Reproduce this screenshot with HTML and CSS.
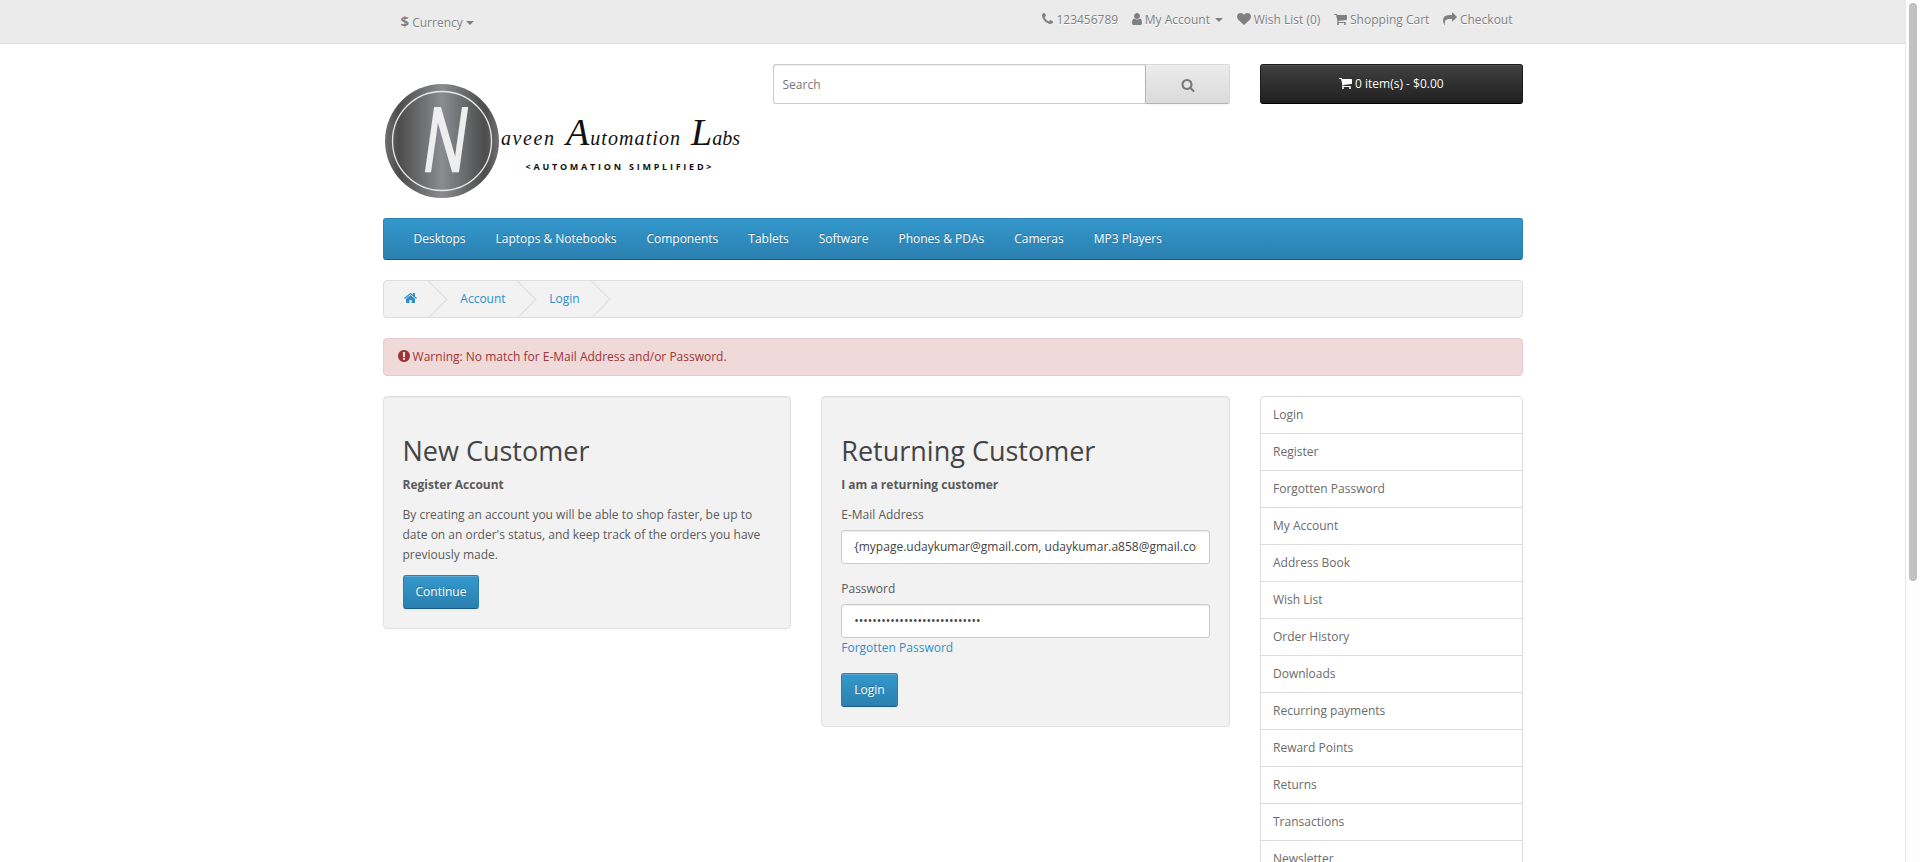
FILE: index.html
```html
<!DOCTYPE html>
<html lang="en">
<head>
<meta charset="utf-8">
<title>Account Login</title>
<link rel="stylesheet" href="styles.css">
</head>
<body>
<div class="shell">
  <div class="page">
    <nav class="top">
      <div class="container top-inner">
        <div class="currency"><span class="dollar">$</span> Currency <span class="caret"></span></div>
        <ul class="top-links">
          <li><svg class="ic" viewBox="192 0 1408 1792"><path d="M1600 1240q0 27-10 70.500t-21 68.500q-21 50-122 106-94 51-186 51-27 0-53-3.500t-57.500-12.500-47-14.500-55.500-20.500-49-18q-98-35-175-83-127-79-264-216t-216-264q-48-77-83-175-3-9-18-49t-20.500-55.500-14.500-47-12.500-57.500-3.500-53q0-92 51-186 56-101 106-122 25-11 68.500-21t70.500-10q14 0 21 3 18 6 53 76 11 19 30 54t35 63.500 31 53.500q3 4 17.500 25t21.500 35.500 7 28.500q0 20-28.500 50t-62 55-62 53-28.500 46q0 9 5 22.500t8.500 20.500 14 24 11.500 19q76 137 174 235t235 174q2 1 19 11.500t24 14 20.500 8.500 22.500 5q18 0 46-28.500t53-62 55-62 50-28.500q14 0 28.500 7t35.500 21.500 25 17.500q25 15 53.500 31t63.500 35 54 30q70 35 76 53 3 7 3 21z"/></svg> 123456789</li>
          <li><svg class="ic" viewBox="256 0 1280 1792"><path d="M1536 1399q0 109-62.500 187t-150.500 78h-854q-88 0-150.500-78t-62.500-187q0-85 8.500-160.500t31.500-152 58.500-131 94-89 134.500-34.500q131 128 313 128t313-128q76 0 134.500 34.500t94 89 58.500 131 31.500 152 8.500 160.500zm-256-887q0 159-112.500 271.500t-271.500 112.500-271.500-112.500-112.500-271.500 112.500-271.500 271.500-112.500 271.500 112.500 112.500 271.500z"/></svg> My Account <span class="caret"></span></li>
          <li><svg class="ic" viewBox="0 0 1792 1792"><path d="M896 1664q-26 0-44-18l-624-602q-10-8-27.500-26t-55.500-65.500-68-97.500-53.500-121-23.500-138q0-220 127-344t351-124q62 0 126.500 21.500t120 58 95.500 68.500 76 68q36-36 76-68t95.500-68.500 120-58 126.500-21.500q224 0 351 124t127 344q0 221-229 450l-623 600q-18 18-44 18z"/></svg> Wish List (0)</li>
          <li><svg class="ic" viewBox="64 0 1664 1792"><path d="M704 1536q0 52-38 90t-90 38-90-38-38-90 38-90 90-38 90 38 38 90zm896 0q0 52-38 90t-90 38-90-38-38-90 38-90 90-38 90 38 38 90zm128-1088v512q0 24-16.500 42.500t-40.500 21.500l-1044 122q13 60 13 70 0 16-24 64h920q26 0 45 19t19 45-19 45-45 19h-1024q-26 0-45-19t-19-45q0-11 8-31.500t16-36 21.500-40 15.500-29.500l-177-823h-204q-26 0-45-19t-19-45 19-45 45-19h256q16 0 28.500 6.500t19.500 15.500 13 24.500 8 26 5.500 29.500 4.500 26h1201q26 0 45 19t19 45z"/></svg> Shopping Cart</li>
          <li><svg class="ic" viewBox="0 0 1792 1792"><path d="M1792 640q0 26-19 45l-512 512q-19 19-45 19t-45-19-19-45v-256h-224q-98 0-175.500 6t-154 21.500-133 42.500-105.500 69.500-80 101-48.500 138.500-17.500 181q0 55 5 123 0 6 2.500 23.500t2.500 26.500q0 15-8.500 25t-23.500 10q-16 0-28-17-7-9-13-22t-13.500-30-10.500-24q-127-285-127-451 0-199 53-333 162-403 875-403h224v-256q0-26 19-45t45-19 45 19l512 512q19 19 19 45z"/></svg> Checkout</li>
        </ul>
      </div>
    </nav>

    <div class="container">
      <header class="header">
        <svg class="logo" viewBox="0 0 360 144" role="img" aria-label="Naveen Automation Labs">
          <defs>
            <linearGradient id="metal" x1="0" y1="0" x2="1" y2="0">
              <stop offset="0" stop-color="#707070"/>
              <stop offset="0.12" stop-color="#4c4c4c"/>
              <stop offset="0.5" stop-color="#8a8c8f"/>
              <stop offset="0.88" stop-color="#4c4c4c"/>
              <stop offset="1" stop-color="#707070"/>
            </linearGradient>
          </defs>
          <circle cx="59" cy="77" r="57" fill="url(#metal)"/>
          <circle cx="59" cy="77" r="49.500" class="logo-ring"/>
          <text x="0" y="0" class="logo-n" transform="translate(59 107) skewX(-8) scale(.66 1)">N</text>
          <text x="118" y="81" textLength="53" class="logo-script s-low">aveen</text>
          <text x="183" y="81" textLength="114" class="logo-script s-low"><tspan class="s-cap">A</tspan>utomation</text>
          <text x="308" y="81" textLength="49" class="logo-script s-low"><tspan class="s-cap">L</tspan>abs</text>
          <text x="142.500" y="106" textLength="186" lengthAdjust="spacing" class="logo-tag">&lt;AUTOMATION SIMPLIFIED&gt;</text>
        </svg>
        <div class="search">
          <input class="search-input" type="text" placeholder="Search">
          <button class="search-btn" type="button"><svg class="ic" viewBox="0 0 1792 1792"><path d="M1216 832q0-185-131.500-316.500t-316.500-131.500-316.500 131.500-131.500 316.500 131.500 316.500 316.500 131.500 316.500-131.500 131.500-316.500zm512 832q0 52-38 90t-90 38q-54 0-90-38l-343-342q-179 124-399 124-143 0-273.500-55.500t-225-150-150-225-55.500-273.500 55.500-273.500 150-225 225-150 273.500-55.500 273.500 55.500 225 150 150 225 55.500 273.500q0 220-124 399l343 343q37 37 37 90z"/></svg></button>
        </div>
        <button class="cart-btn" type="button"><svg class="ic" viewBox="64 0 1664 1792"><path d="M704 1536q0 52-38 90t-90 38-90-38-38-90 38-90 90-38 90 38 38 90zm896 0q0 52-38 90t-90 38-90-38-38-90 38-90 90-38 90 38 38 90zm128-1088v512q0 24-16.500 42.500t-40.500 21.500l-1044 122q13 60 13 70 0 16-24 64h920q26 0 45 19t19 45-19 45-45 19h-1024q-26 0-45-19t-19-45q0-11 8-31.500t16-36 21.500-40 15.500-29.500l-177-823h-204q-26 0-45-19t-19-45 19-45 45-19h256q16 0 28.500 6.500t19.500 15.500 13 24.500 8 26 5.500 29.500 4.500 26h1201q26 0 45 19t19 45z"/></svg> 0 item(s) - $0.00</button>
      </header>

      <ul class="menu">
        <li>Desktops</li>
        <li>Laptops &amp; Notebooks</li>
        <li>Components</li>
        <li>Tablets</li>
        <li>Software</li>
        <li>Phones &amp; PDAs</li>
        <li>Cameras</li>
        <li>MP3 Players</li>
      </ul>

      <ul class="breadcrumb">
        <li><a href="#"><svg class="ic" viewBox="60 0 1680 1792"><path d="M1472 992v480q0 26-19 45t-45 19h-384v-384h-256v384h-384q-26 0-45-19t-19-45v-480q0-1 .5-3t.5-3l575-474 575 474q1 2 1 6zm223-69l-62 74q-8 9-21 11h-3q-13 0-21-7l-692-577-692 577q-12 8-24 7-13-2-21-11l-62-74q-8-10-7-23.500t11-21.500l719-599q32-26 76-26t76 26l244 204v-195q0-14 9-23t23-9h192q14 0 23 9t9 23v408l219 182q10 8 11 21.500t-7 23.500z"/></svg></a></li>
        <li><a href="#">Account</a></li>
        <li><a href="#">Login</a></li>
      </ul>

      <div class="alert"><svg class="ic" viewBox="128 0 1536 1792"><path d="M896 128q209 0 385.500 103t279.500 279.500 103 385.500-103 385.500-279.500 279.500-385.500 103-385.500-103-279.500-279.500-103-385.500 103-385.500 279.500-279.500 385.500-103zm128 1247v-190q0-14-9-23.500t-22-9.500h-192q-13 0-23 10t-10 23v190q0 13 10 23t23 10h192q13 0 22-9.500t9-23.500zm-2-344l18-621q0-12-10-18-10-8-24-8h-220q-14 0-24 8-10 6-10 18l17 621q0 10 10 17.500t24 7.500h185q14 0 23.500-7.500t10.500-17.500z"/></svg> Warning: No match for E-Mail Address and/or Password.</div>

      <div class="layout">
        <main class="wells">
          <section class="well">
            <h2>New Customer</h2>
            <p><strong>Register Account</strong></p>
            <p>By creating an account you will be able to shop faster, be up to date on an order's status, and keep track of the orders you have previously made.</p>
            <a class="btn" href="#">Continue</a>
          </section>
          <section class="well">
            <h2>Returning Customer</h2>
            <p><strong>I am a returning customer</strong></p>
            <div class="field">
              <label class="label" for="email">E-Mail Address</label>
              <input class="control" id="email" type="text" value="{mypage.udaykumar@gmail.com, udaykumar.a858@gmail.com}">
            </div>
            <div class="field">
              <label class="label" for="pw">Password</label>
              <input class="control" id="pw" type="password" value="xxxxxxxxxxxxxxxxxxxxxxxxxxxx">
              <a class="forgot" href="#">Forgotten Password</a>
            </div>
            <a class="btn" href="#">Login</a>
          </section>
        </main>
        <aside class="sidebar">
          <a href="#">Login</a>
          <a href="#">Register</a>
          <a href="#">Forgotten Password</a>
          <a href="#">My Account</a>
          <a href="#">Address Book</a>
          <a href="#">Wish List</a>
          <a href="#">Order History</a>
          <a href="#">Downloads</a>
          <a href="#">Recurring payments</a>
          <a href="#">Reward Points</a>
          <a href="#">Returns</a>
          <a href="#">Transactions</a>
          <a href="#">Newsletter</a>
        </aside>
      </div>
    </div>
  </div>
  <div class="scrollbar"><div class="thumb"></div></div>
</div>
</body>
</html>
```
FILE: styles.css
```css
* { box-sizing: border-box; }
html, body { margin: 0; height: 100%; overflow: hidden; }
body {
  font-family: "Open Sans", "Liberation Sans", sans-serif;
  font-size: 12px;
  line-height: 20px;
  color: #5a5a5a;
  background: #fff;
}
ul { list-style: none; margin: 0; padding: 0; }
a { text-decoration: none; color: #2f8fc9; }
.shell { display: flex; height: 862px; overflow: hidden; }
.page { width: 1905px; flex: none; overflow: hidden; }
.scrollbar { flex: 1; background: #fdfdfd; border-left: 1px solid #e8e8e8; padding: 3px 3px 0 3px; }
.thumb { width: 8px; height: 578px; background: #c1c1c1; border-radius: 4px; }
.container { width: 1170px; margin: 0 auto; padding: 0 15px; }
.ic { height: 14px; width: auto; fill: currentColor; vertical-align: -2px; }

/* top bar */
.top { height: 44px; margin-bottom: 20px; background: #ebebeb; border-bottom: 1px solid #e0e0e0; color: #808080; text-shadow: 0 1px 0 #fff; }
.top-inner { display: flex; justify-content: space-between; align-items: flex-start; }
.currency { padding: 11px 0 0 18px; }
.dollar { font-size: 15px; font-weight: 700; }
.caret { display: inline-block; width: 0; height: 0; margin-left: 0; vertical-align: 2px; border-top: 4px solid; border-right: 4px solid transparent; border-left: 4px solid transparent; }
.top-links { display: flex; gap: 3.500px; padding: 10px 5px 0 0; }
.top-links li { padding: 0 5px; white-space: nowrap; }
.top-links .caret { margin-left: 2px; }

/* header */
.header { display: grid; grid-template-columns: 360px 457.500px 262.500px; column-gap: 30px; align-items: start; height: 154px; }
.logo { display: block; width: 360px; height: 144px; }
.logo-ring { fill: none; stroke: #e8e8e8; stroke-width: 1.300; }
.logo-n { font-family: "Open Sans", sans-serif; font-size: 88px; fill: #eee; stroke: #eee; stroke-width: 2.500px; text-anchor: middle; }
.logo-script { font-family: "Liberation Serif", serif; font-style: italic; fill: #111; }
.s-low { font-size: 20px; }
.s-cap { font-size: 38px; }
.logo-tag { font-family: "Open Sans", sans-serif; font-size: 9px; font-weight: 700; fill: #111; }
.search { display: flex; height: 40px; }
.search-input { flex: 1; min-width: 0; height: 40px; padding: 0 9px; font: 12px/20px "Open Sans", sans-serif; color: #555; background: #fff; border: 1px solid #ccc; border-right: 0; border-radius: 3px 0 0 3px; box-shadow: inset 0 1px 1px rgba(0,0,0,.075); outline: 0; }
.search-input::placeholder { color: #777; opacity: 1; }
.search-btn { width: 85px; height: 40px; padding: 0; color: #777; background: linear-gradient(#ececec, #dadada); border: 1px solid #d8d8d8; border-bottom-color: #b3b3b3; border-left-color: #b7b7b7; border-radius: 0 3px 3px 0; box-shadow: inset 0 1px 0 rgba(255,255,255,.2), 0 1px 2px rgba(0,0,0,.05); }
.search-btn .ic { vertical-align: middle; }
.cart-btn { height: 40px; padding: 0; font: 12px/18px "Open Sans", sans-serif; color: #fff; background: linear-gradient(#404040, #202020); border: 1px solid #1c1c1c; border-bottom-color: #000; border-radius: 3px; text-shadow: 0 -1px 0 rgba(0,0,0,.25); box-shadow: inset 0 1px 0 rgba(255,255,255,.1); }

/* menu */
.menu { display: flex; min-height: 42px; margin-bottom: 20px; padding: 0 15px; background: linear-gradient(#3498cc, #2b80b0); border: 1px solid #2b80b0; border-bottom-color: #1d5a80; border-radius: 3px; color: #fff; text-shadow: 0 -1px 0 rgba(0,0,0,.25); }
.menu li { padding: 10px 15px; white-space: nowrap; }

/* breadcrumb */
.breadcrumb { display: flex; gap: 3.700px; height: 38px; margin-bottom: 20px; padding: 8px 0; overflow: hidden; background: #f2f2f2; border: 1px solid #ddd; border-radius: 4px; }
.breadcrumb li { position: relative; padding: 0 20px; white-space: nowrap; }
.breadcrumb li::after { content: ""; position: absolute; top: -3px; right: -5px; width: 26px; height: 26px; border-right: 1px solid #ddd; border-bottom: 1px solid #ddd; transform: rotate(-45deg); }

/* alert */
.alert { height: 38px; margin-bottom: 20px; padding: 8px 14px; color: #9c3636; background: #f0d9d9; border: 1px solid #e8c9ce; border-radius: 4px; }

/* content */
.layout { display: grid; grid-template-columns: 847.500px 262.500px; column-gap: 30px; align-items: start; }
.wells { display: grid; grid-template-columns: 1fr 1fr; column-gap: 30px; align-items: start; }
.well { padding: 19px; background: #f2f2f2; border: 1px solid #e1e1e1; border-radius: 4px; box-shadow: inset 0 1px 1px rgba(0,0,0,.05); }
h2 { margin: 20px 0 9px; font-size: 27px; font-weight: 400; line-height: 1.1; color: #444; }
p { margin: 0 0 10px; }
.field { margin-bottom: 15px; }
.label { display: block; margin-bottom: 5px; }
.control { display: block; width: 100%; height: 34px; padding: 6px 12px; font: 12px/20px "Open Sans", sans-serif; color: #444; background: #fff; border: 1px solid #ccc; border-radius: 3px; box-shadow: inset 0 1px 1px rgba(0,0,0,.075); outline: 0; }
.btn { display: inline-block; padding: 6px 12px; color: #fff; background: linear-gradient(#3498cc, #2b80b0); border: 1px solid #2b80b0; border-bottom-color: #1d5a80; border-radius: 3px; text-shadow: 0 -1px 0 rgba(0,0,0,.25); box-shadow: inset 0 1px 0 rgba(255,255,255,.2), 0 1px 2px rgba(0,0,0,.05); }

/* sidebar */
.sidebar { display: flex; flex-direction: column; }
.sidebar a { display: block; height: 38px; margin-bottom: -1px; padding: 8px 12px; color: #6b6b6b; background: #fff; border: 1px solid #ddd; }
.sidebar a:first-child { border-radius: 4px 4px 0 0; }
```
